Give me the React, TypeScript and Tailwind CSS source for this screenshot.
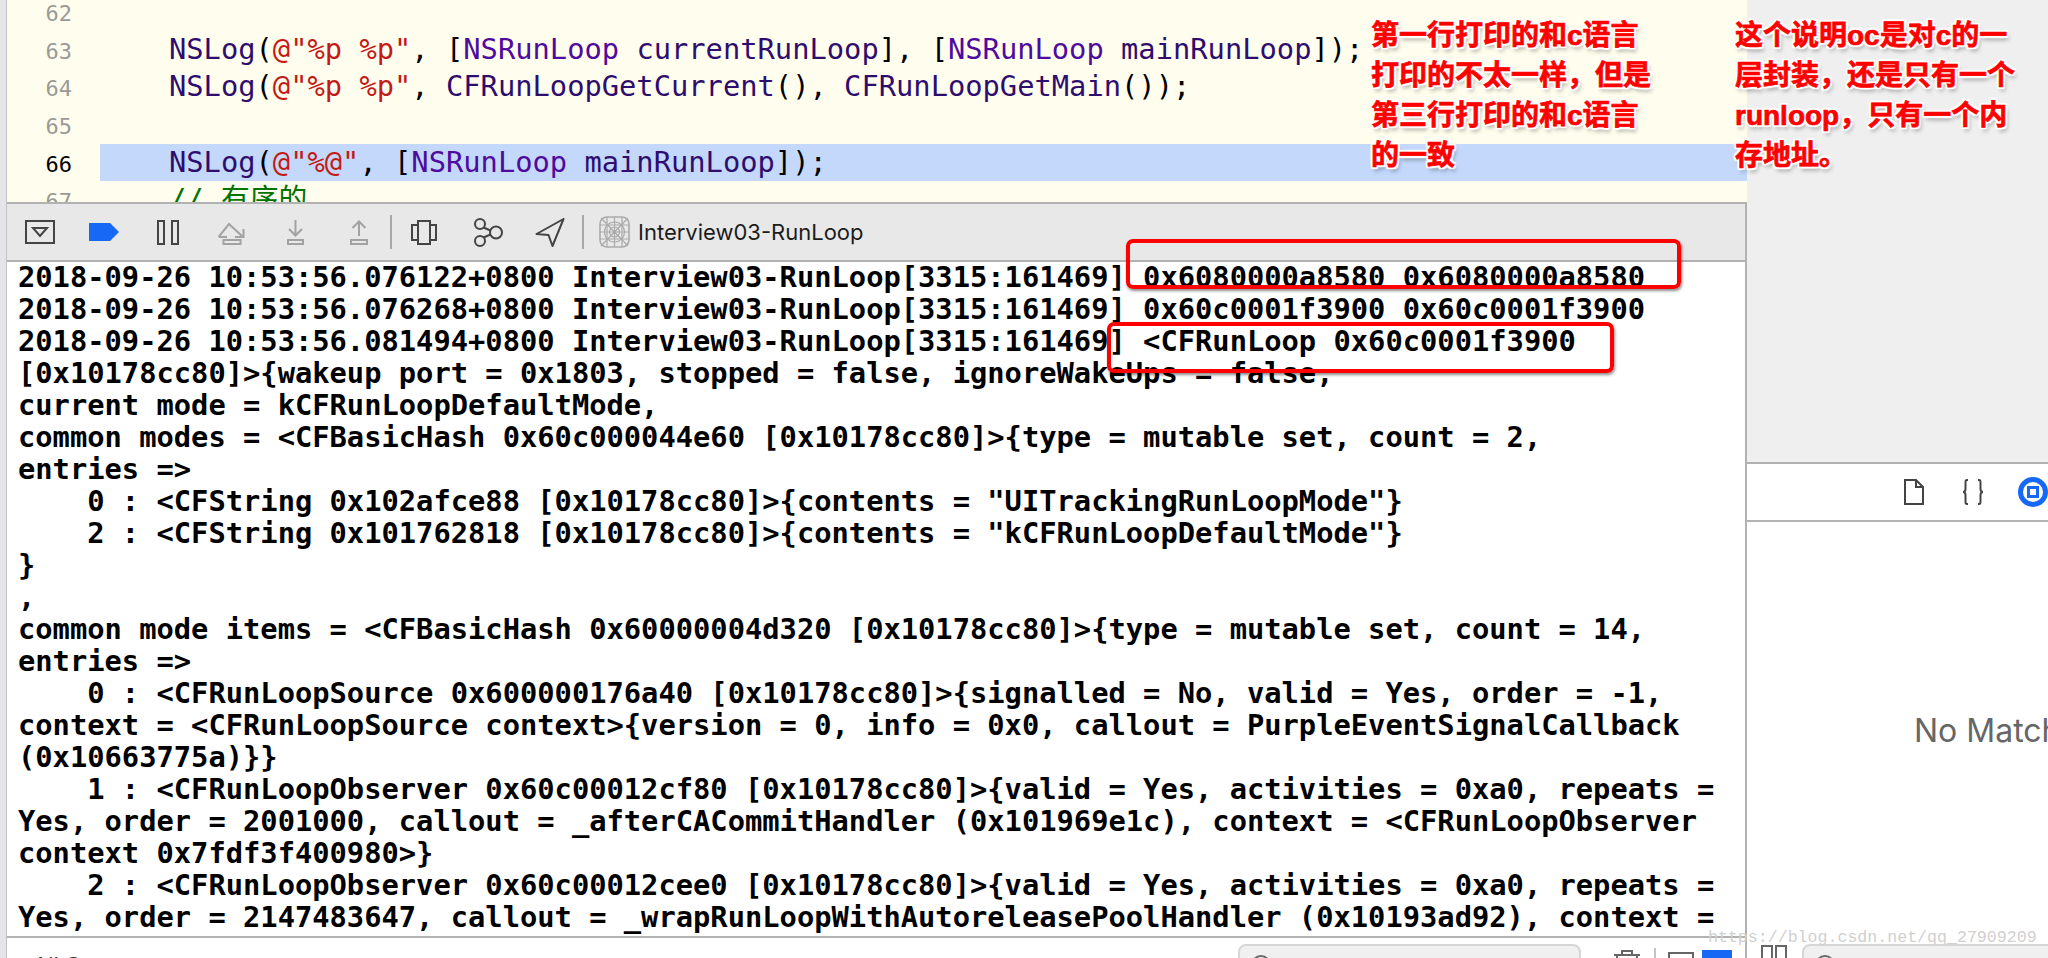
import { ReactNode } from 'react';

const consoleLines = [
  '2018-09-26 10:53:56.076122+0800 Interview03-RunLoop[3315:161469] 0x6080000a8580 0x6080000a8580',
  '2018-09-26 10:53:56.076268+0800 Interview03-RunLoop[3315:161469] 0x60c0001f3900 0x60c0001f3900',
  '2018-09-26 10:53:56.081494+0800 Interview03-RunLoop[3315:161469] <CFRunLoop 0x60c0001f3900',
  '[0x10178cc80]>{wakeup port = 0x1803, stopped = false, ignoreWakeUps = false,',
  'current mode = kCFRunLoopDefaultMode,',
  'common modes = <CFBasicHash 0x60c000044e60 [0x10178cc80]>{type = mutable set, count = 2,',
  'entries =>',
  '    0 : <CFString 0x102afce88 [0x10178cc80]>{contents = "UITrackingRunLoopMode"}',
  '    2 : <CFString 0x101762818 [0x10178cc80]>{contents = "kCFRunLoopDefaultMode"}',
  '}',
  ',',
  'common mode items = <CFBasicHash 0x60000004d320 [0x10178cc80]>{type = mutable set, count = 14,',
  'entries =>',
  '    0 : <CFRunLoopSource 0x600000176a40 [0x10178cc80]>{signalled = No, valid = Yes, order = -1,',
  'context = <CFRunLoopSource context>{version = 0, info = 0x0, callout = PurpleEventSignalCallback',
  '(0x10663775a)}}',
  '    1 : <CFRunLoopObserver 0x60c00012cf80 [0x10178cc80]>{valid = Yes, activities = 0xa0, repeats =',
  'Yes, order = 2001000, callout = _afterCACommitHandler (0x101969e1c), context = <CFRunLoopObserver',
  'context 0x7fdf3f400980>}',
  '    2 : <CFRunLoopObserver 0x60c00012cee0 [0x10178cc80]>{valid = Yes, activities = 0xa0, repeats =',
  'Yes, order = 2147483647, callout = _wrapRunLoopWithAutoreleasePoolHandler (0x10193ad92), context =',
  '<CFRunLoopObserver context 0x7fdf3f4011b0>}',
];

function Fn({ children }: { children: ReactNode }) {
  return <span className="text-[#2e0d6e]">{children}</span>;
}
function Cls({ children }: { children: ReactNode }) {
  return <span className="text-[#4f0a9e]">{children}</span>;
}
function Str({ children }: { children: ReactNode }) {
  return <span className="text-[#c41a16]">{children}</span>;
}

function CodeRow({ num, active, children }: { num: number; active?: boolean; children?: ReactNode }) {
  return (
    <div className="flex h-[37.7px] leading-[37.7px]">
      <div className={`w-[93px] pr-[28px] pt-[2px] text-right text-[22px] ${active ? 'text-black' : 'text-[#9a9a96]'}`}>{num}</div>
      <div className={`flex-1 pl-[69px] whitespace-pre text-[28.75px] text-black ${active ? 'bg-[#c3d8fb]' : ''}`}>{children}</div>
    </div>
  );
}

function Editor() {
  return (
    <div className="h-[202px] w-[1740px] overflow-hidden bg-[#fffdee] font-['DejaVu_Sans_Mono','Noto_Sans_CJK_SC',monospace]">
      <div className="-mt-[7px]">
        <CodeRow num={62} />
        <CodeRow num={63}>
          <Fn>NSLog</Fn>(<Str>@"%p %p"</Str>, [<Cls>NSRunLoop</Cls> <Fn>currentRunLoop</Fn>], [<Cls>NSRunLoop</Cls> <Fn>mainRunLoop</Fn>]);
        </CodeRow>
        <CodeRow num={64}>
          <Fn>NSLog</Fn>(<Str>@"%p %p"</Str>, <Fn>CFRunLoopGetCurrent</Fn>(), <Fn>CFRunLoopGetMain</Fn>());
        </CodeRow>
        <CodeRow num={65} />
        <CodeRow num={66} active>
          <Fn>NSLog</Fn>(<Str>@"%@"</Str>, [<Cls>NSRunLoop</Cls> <Fn>mainRunLoop</Fn>]);
        </CodeRow>
        <CodeRow num={67}>
          <span className="text-[#007400]">// 有序的</span>
        </CodeRow>
      </div>
    </div>
  );
}

function Separator({ className }: { className: string }) {
  return <div className={`h-[34px] w-[2px] shrink-0 bg-[#a8a8a8] ${className}`} />;
}

function DebugToolbar() {
  const dark = '#444444';
  const dim = '#a2a2a2';
  return (
    <div className="flex h-[60px] items-center border-y-2 border-[#b2b2b2] bg-[#e8e8e8]">
      <svg className="ml-[18px] shrink-0" width="30" height="24" fill="none" stroke={dark} strokeWidth="2">
        <rect x="1" y="1" width="28" height="22" />
        <path d="M8 8 H22 L15 16 Z" />
      </svg>
      <svg className="ml-[34px] shrink-0" width="30" height="18">
        <path d="M0 0 H21 L30 9 L21 18 H0 Z" fill="#1769f5" />
      </svg>
      <svg className="ml-[38px] shrink-0" width="22" height="25" fill="none" stroke={dark} strokeWidth="2">
        <rect x="1" y="1" width="6" height="23" />
        <rect x="15" y="1" width="6" height="23" />
      </svg>
      <svg className="ml-[39px] shrink-0" width="27" height="25" fill="none" stroke={dim} strokeWidth="2">
        <path d="M0.5 17 L11 4 L24 16 M25.5 9 V17 H17 M1 17 H9" />
        <rect x="5.5" y="20" width="17" height="4" />
      </svg>
      <svg className="ml-[42px] shrink-0" width="17" height="25" fill="none" stroke={dim} strokeWidth="2">
        <path d="M8.5 0 V15 M2 9 L8.5 15.5 L15 9" />
        <rect x="1" y="20" width="15" height="4" />
      </svg>
      <svg className="ml-[46px] shrink-0" width="18" height="25" fill="none" stroke={dim} strokeWidth="2">
        <path d="M9 2 V16 M2.5 8 L9 1.5 L15.5 8" />
        <rect x="1" y="20" width="16" height="4" />
      </svg>
      <Separator className="ml-[22px]" />
      <svg className="ml-[19px] shrink-0" width="26" height="25" fill="none" stroke={dark} strokeWidth="2">
        <rect x="7" y="1" width="12" height="23" />
        <path d="M7 5 H1 V20 H7 M19 5 H25 V20 H19" />
      </svg>
      <svg className="ml-[36px] shrink-0" width="30" height="29" fill="none" stroke={dark} strokeWidth="2">
        <circle cx="7" cy="6" r="5" />
        <circle cx="23" cy="14.5" r="6" />
        <circle cx="7" cy="23" r="5" />
        <path d="M10.5 9.5 L17.5 12.5 M10.5 19.5 L17.5 16.5" />
      </svg>
      <svg className="ml-[32px] shrink-0" width="30" height="29" fill="none" stroke={dark} strokeWidth="2">
        <path d="M28.5 1 L1.5 16 L13.5 17 L17.5 28 Z" strokeLinejoin="round" />
      </svg>
      <Separator className="ml-[17px]" />
      <svg className="ml-[15px] shrink-0" width="31" height="32" fill="none" stroke="#aaaaaa" strokeWidth="1.2">
        <rect x="1" y="1" width="29" height="30" rx="7" strokeWidth="1.6" />
        <circle cx="15.5" cy="16" r="10" />
        <circle cx="15.5" cy="16" r="5" />
        <path d="M1 9 H30 M1 16 H30 M1 23 H30 M8 1 V31 M15.5 1 V31 M23 1 V31 M2 2 L29 30 M29 2 L2 30" />
      </svg>
      <span className="ml-[8px] font-['Inter',sans-serif] text-[22px] text-[#1c1c1c] whitespace-nowrap">Interview03-RunLoop</span>
    </div>
  );
}

function ConsoleOutput() {
  return (
    <div className="h-[674px] overflow-hidden bg-white pl-[11px] font-['DejaVu_Sans_Mono',monospace] text-[28.75px] font-bold leading-[32px] text-black">
      <div className="-mt-px">
        {consoleLines.map((line, i) => (
          <div key={i} className="h-[32px] whitespace-pre">{line}</div>
        ))}
      </div>
    </div>
  );
}

function SearchField({ className }: { className: string }) {
  return (
    <div className={`h-[40px] shrink-0 rounded-[8px] border-2 border-[#d6d6d6] bg-[#f0f0f0] pl-[10px] pt-[8px] ${className}`}>
      <svg width="24" height="24" fill="none" stroke="#6a6a6a" strokeWidth="2">
        <circle cx="11" cy="11" r="9" />
      </svg>
    </div>
  );
}

function ConsoleFilterBar() {
  return (
    <div className="flex h-[20px] overflow-hidden bg-white">
      <span className="ml-[26px] mt-[15px] font-['Inter',sans-serif] text-[22px] leading-[24px] text-[#333]">All Output</span>
      <SearchField className="ml-auto mt-[6px] w-[343px]" />
      <svg className="ml-[33px] mt-[12px] shrink-0" width="26" height="24" fill="none" stroke="#666" strokeWidth="2">
        <path d="M8 4 V1 H18 V4 M0 5 H26 M3 5 V24 H23 V5" />
      </svg>
      <div className="ml-[14px] mt-[10px] h-[24px] w-[2px] shrink-0 bg-[#c4c4c4]" />
      <div className="ml-[12px] mt-[14px] h-[24px] w-[26px] shrink-0 border-2 border-[#666]" />
      <div className="ml-[8px] mt-[12px] h-[24px] w-[30px] shrink-0 bg-[#1769f5]" />
      <div className="w-[13px] shrink-0" />
    </div>
  );
}

function Inspector() {
  return (
    <div className="flex min-w-0 flex-1 flex-col">
      <div className="h-[462px] bg-[#efefef]" />
      <div className="flex h-[60px] items-center border-y-2 border-[#b2b2b2] bg-white pl-[157px]">
        <svg className="shrink-0" width="20" height="26" fill="none" stroke="#444" strokeWidth="2">
          <path d="M1 1 H12 L19 8 V25 H1 Z M12 1 V8 H19" />
        </svg>
        <svg className="ml-[38px] shrink-0" width="22" height="26" fill="none" stroke="#444" strokeWidth="2">
          <path d="M6 1 H5 Q3.5 1 3.5 3 V10 Q3.5 13 1 13 Q3.5 13 3.5 16 V23 Q3.5 25 5 25 H6 M16 1 H17 Q18.5 1 18.5 3 V10 Q18.5 13 21 13 Q18.5 13 18.5 16 V23 Q18.5 25 17 25 H16" />
        </svg>
        <svg className="ml-[34px] shrink-0" width="30" height="30" fill="none" stroke="#1769f5">
          <circle cx="15" cy="15" r="12.5" strokeWidth="5" />
          <rect x="10.5" y="10.5" width="9" height="9" strokeWidth="3" />
        </svg>
      </div>
      <div className="flex-1 overflow-hidden bg-white pl-[167px] pt-[189px]">
        <div className="whitespace-nowrap font-['Inter',sans-serif] text-[32px] leading-[40px] text-[#666]">No Matches</div>
      </div>
      <div className="flex h-[14px] overflow-hidden bg-white">
        <svg className="ml-[14px] mt-[1px] shrink-0" width="26" height="24" fill="none" stroke="#666" strokeWidth="2">
          <rect x="1" y="1" width="10" height="20" />
          <rect x="15" y="1" width="10" height="20" />
        </svg>
        <SearchField className="ml-[15px] w-[300px]" />
      </div>
    </div>
  );
}

function RedBox({ className }: { className: string }) {
  return (
    <div className={`pointer-events-none absolute rounded-[7px] border-[4px] border-[#ff0000] shadow-[1px_2px_3px_rgba(0,0,0,0.45)] ${className}`} />
  );
}

function Note({ lines, className }: { lines: string[]; className: string }) {
  return (
    <div className={`absolute top-[16px] whitespace-nowrap font-['Liberation_Sans','Noto_Sans_CJK_SC',sans-serif] text-[28px] font-bold leading-[40px] text-[#ff0000] [-webkit-text-stroke:0.7px_#ff0000] [text-shadow:2px_0_1px_#fff,-2px_0_1px_#fff,0_2px_1px_#fff,0_-2px_1px_#fff,2px_2px_1px_#fff,-2px_-2px_1px_#fff,2px_-2px_1px_#fff,-2px_2px_1px_#fff,2px_4px_4px_rgba(0,0,0,0.35)] ${className}`}>
      {lines.map((line) => (
        <div key={line}>{line}</div>
      ))}
    </div>
  );
}

export default function App() {
  return (
    <div className="relative flex h-[958px] w-[2048px] overflow-hidden bg-white">
      <div className="w-[7px] shrink-0 border-r border-[#c2c2c6] bg-[#e4e4e9]" />
      <div className="flex w-[1740px] shrink-0 flex-col">
        <Editor />
        <div className="border-r-2 border-[#b2b2b2]">
          <DebugToolbar />
          <ConsoleOutput />
          <div className="h-[2px] bg-[#b2b2b2]" />
          <ConsoleFilterBar />
        </div>
      </div>
      <Inspector />

      <RedBox className="left-[1126px] top-[239px] h-[50px] w-[555px]" />
      <RedBox className="left-[1107px] top-[322px] h-[51px] w-[507px]" />

      <Note className="left-[1371px]" lines={['第一行打印的和c语言', '打印的不太一样，但是', '第三行打印的和c语言', '的一致']} />
      <Note className="left-[1735px]" lines={['这个说明oc是对c的一', '层封装，还是只有一个', 'runloop，只有一个内', '存地址。']} />

      <div className="absolute left-[1708px] top-[927px] font-['Liberation_Mono',monospace] text-[16.6px] leading-[22px] text-[#d0d0d0] whitespace-nowrap">
        https://blog.csdn.net/qq_27909209
      </div>
    </div>
  );
}
